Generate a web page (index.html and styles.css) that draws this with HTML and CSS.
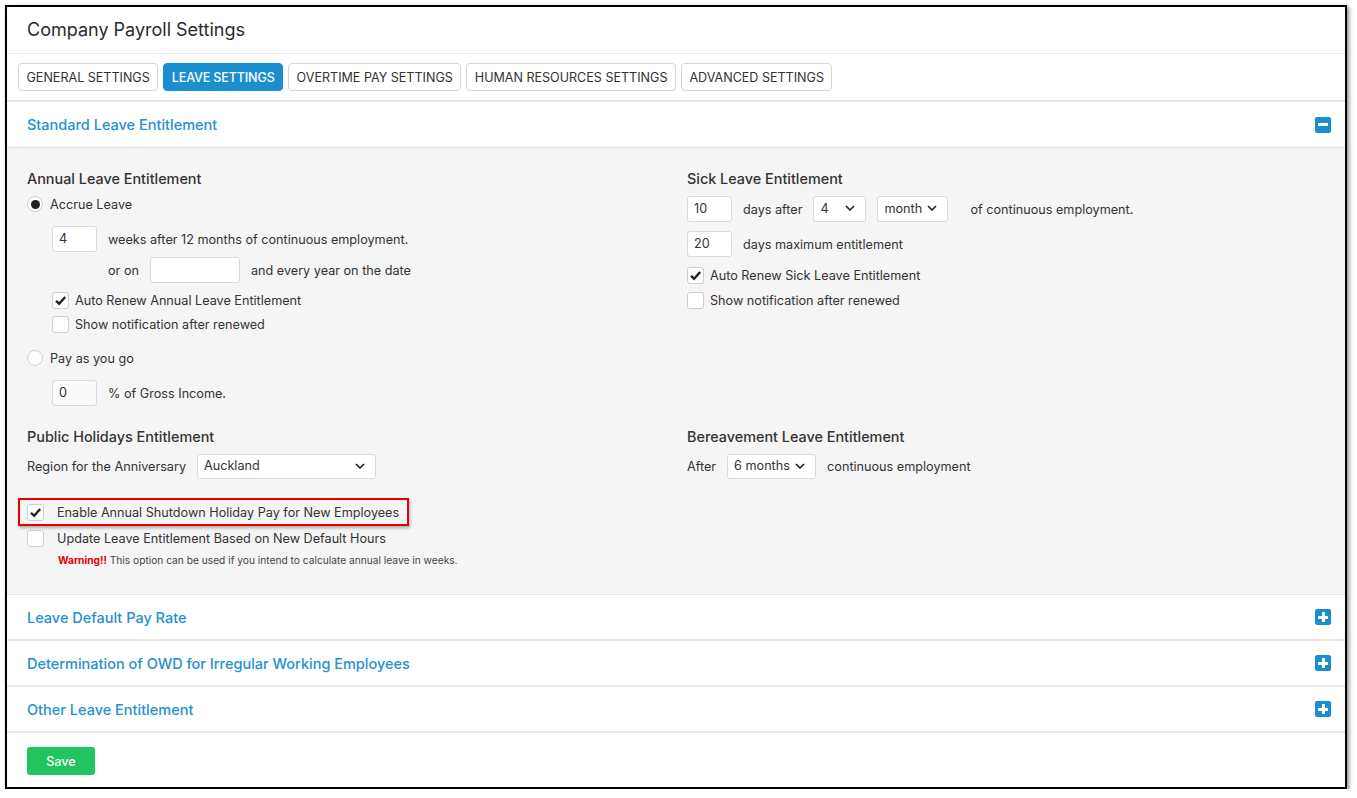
FILE: index.html
```html
<!DOCTYPE html>
<html lang="en">
<head>
  <meta charset="UTF-8">
  <title>Company Payroll Settings</title>
  <link rel="stylesheet" href="styles.css">
</head>
<body>
  <div class="frame">
    <div class="page-title">Company Payroll Settings</div>

    <div class="tabs">
      <a href="#" class="tab">GENERAL SETTINGS</a>
      <a href="#" class="tab active">LEAVE SETTINGS</a>
      <a href="#" class="tab">OVERTIME PAY SETTINGS</a>
      <a href="#" class="tab">HUMAN RESOURCES SETTINGS</a>
      <a href="#" class="tab">ADVANCED SETTINGS</a>
    </div>

    <div class="section-head open">
      <span>Standard Leave Entitlement</span>
      <span class="toggle"><span class="bar"></span></span>
    </div>

    <div class="section-body">
      <div class="grid">
        <!-- annual leave -->
        <div class="col">
          <div class="field-title">Annual Leave Entitlement</div>
          <div class="radio-row mt7"><span class="radio checked"></span>Accrue Leave</div>
          <div class="line indent mt14">
            <span class="input w45">4</span>
            <span>weeks after 12 months of continuous employment.</span>
          </div>
          <div class="line indent-or mt5">
            <span>or on</span>
            <span class="input w90"></span>
            <span>and every year on the date</span>
          </div>
          <div class="check-row indent mt9">
            <span class="checkbox checked"><svg viewBox="0 0 17 17"><path d="M3.4 8.8 L6.9 12.3 L13.8 4.6" /></svg></span>
            Auto Renew Annual Leave Entitlement
          </div>
          <div class="check-row indent mt7">
            <span class="checkbox"></span>
            Show notification after renewed
          </div>
          <div class="radio-row mt17"><span class="radio"></span>Pay as you go</div>
          <div class="line indent mt14">
            <span class="input w45 disabled">0</span>
            <span>% of Gross Income.</span>
          </div>
        </div>

        <!-- sick leave -->
        <div class="col">
          <div class="field-title">Sick Leave Entitlement</div>
          <div class="line mt7">
            <span class="input w45">10</span>
            <span>days after</span>
            <span class="select w53">4<svg viewBox="0 0 10 6"><path d="M1 1 L5 5 L9 1" /></svg></span>
            <span class="select w71">month<svg viewBox="0 0 10 6"><path d="M1 1 L5 5 L9 1" /></svg></span>
            <span class="after-gap">of continuous employment.</span>
          </div>
          <div class="line mt9">
            <span class="input w45">20</span>
            <span>days maximum entitlement</span>
          </div>
          <div class="check-row mt10">
            <span class="checkbox checked"><svg viewBox="0 0 17 17"><path d="M3.4 8.8 L6.9 12.3 L13.8 4.6" /></svg></span>
            Auto Renew Sick Leave Entitlement
          </div>
          <div class="check-row mt8">
            <span class="checkbox"></span>
            Show notification after renewed
          </div>
        </div>

        <!-- public holidays -->
        <div class="col">
          <div class="field-title">Public Holidays Entitlement</div>
          <div class="line short mt7">
            <span>Region for the Anniversary</span>
            <span class="select w179">Auckland<svg viewBox="0 0 10 6"><path d="M1 1 L5 5 L9 1" /></svg></span>
          </div>
          <div class="highlight mt19">
            <div class="check-row wide">
              <span class="checkbox checked"><svg viewBox="0 0 17 17"><path d="M3.4 8.8 L6.9 12.3 L13.8 4.6" /></svg></span>
              Enable Annual Shutdown Holiday Pay for New Employees
            </div>
          </div>
          <div class="check-row wide mt3">
            <span class="checkbox"></span>
            Update Leave Entitlement Based on New Default Hours
          </div>
          <div class="warning mt7"><b>Warning!!</b> This option can be used if you intend to calculate annual leave in weeks.</div>
        </div>

        <!-- bereavement -->
        <div class="col">
          <div class="field-title">Bereavement Leave Entitlement</div>
          <div class="line short mt7">
            <span>After</span>
            <span class="select w89">6 months<svg viewBox="0 0 10 6"><path d="M1 1 L5 5 L9 1" /></svg></span>
            <span>continuous employment</span>
          </div>
        </div>
      </div>
    </div>

    <div class="section-head">
      <span>Leave Default Pay Rate</span>
      <span class="toggle"><span class="bar"></span><span class="bar vert"></span></span>
    </div>
    <div class="section-head">
      <span>Determination of OWD for Irregular Working Employees</span>
      <span class="toggle"><span class="bar"></span><span class="bar vert"></span></span>
    </div>
    <div class="section-head">
      <span>Other Leave Entitlement</span>
      <span class="toggle"><span class="bar"></span><span class="bar vert"></span></span>
    </div>

    <div class="footer">
      <button class="save-btn">Save</button>
    </div>
  </div>
</body>
</html>
```

FILE: styles.css
```css
* {
  margin: 0;
  padding: 0;
  box-sizing: border-box;
}

body {
  font-family: Inter, "Noto Sans", sans-serif;
  font-size: 12.65px;
  color: #333;
  background: #fff;
  padding: 5px 0 0 5px;
}

.frame {
  width: 1342px;
  height: 784px;
  border: 2px solid #000;
  box-shadow: 2px 2px 4px rgba(0, 0, 0, 0.45);
  display: flex;
  flex-direction: column;
}

.frame > * {
  flex-shrink: 0;
}

.page-title {
  height: 47px;
  padding: 0 0 2px 20px;
  display: flex;
  align-items: center;
  font-size: 18px;
  color: #2b2b2b;
  border-bottom: 1px solid #e8e8e8;
}

.tabs {
  display: flex;
  gap: 5px;
  padding: 9px 11px;
  border-bottom: 2px solid #e6e6e6;
}

.tab {
  height: 28px;
  padding: 0 7.5px;
  display: flex;
  align-items: center;
  border: 1px solid #d4d4d4;
  border-radius: 4px;
  color: #333;
  text-decoration: none;
  font-size: 12.55px;
}

.tab.active {
  background: #1a8ecf;
  border-color: #1a8ecf;
  color: #fff;
  font-weight: 500;
  letter-spacing: -0.15px;
}

.section-head {
  height: 46px;
  padding: 0 14px 0 20px;
  display: flex;
  justify-content: space-between;
  align-items: center;
  font-size: 14.5px;
  font-weight: 500;
  color: #2690d0;
  border-bottom: 2px solid #e8e8e8;
}

.section-head.open {
  border-bottom: 1px solid #e6e6e6;
}

.toggle {
  position: relative;
  width: 16px;
  height: 16px;
  background: #1a8ecf;
  border-radius: 2px;
}

.toggle .bar {
  position: absolute;
  left: 3px;
  top: 6.5px;
  width: 10px;
  height: 3px;
  background: #fff;
}

.toggle .bar.vert {
  left: 6.5px;
  top: 3px;
  width: 3px;
  height: 10px;
}

.section-body {
  background: #f5f5f5;
  padding: 21px 0 28px 20px;
  border-bottom: 1px solid #e6e6e6;
}

.grid {
  display: grid;
  grid-template-columns: 660px 1fr;
  row-gap: 21px;
}

.field-title {
  font-size: 14.4px;
  font-weight: 500;
  line-height: 20px;
}

.mt3 { margin-top: 3px; }
.mt5 { margin-top: 5px; }
.mt7 { margin-top: 7px; }
.mt8 { margin-top: 8px; }
.mt9 { margin-top: 9px; }
.mt10 { margin-top: 10px; }
.mt14 { margin-top: 14px; }
.mt17 { margin-top: 17px; }
.mt19 { margin-top: 19px; }

.line {
  height: 26px;
  display: flex;
  align-items: center;
  gap: 11px;
}

.line.short {
  height: 25px;
}

.indent {
  padding-left: 25px;
}

.indent-or {
  padding-left: 81px;
}

.input,
.select {
  height: 100%;
  display: flex;
  align-items: center;
  padding: 0 6px 2px;
  background: #fff;
  border: 1px solid #dadada;
  border-radius: 3px;
}

.input.disabled {
  background: #fafafa;
}

.select {
  justify-content: space-between;
  padding-right: 10px;
}

.select svg {
  width: 10px;
  height: 6px;
  fill: none;
  stroke: #222;
  stroke-width: 1.6;
}

.w45 { width: 45px; }
.w53 { width: 53px; }
.w71 { width: 71px; }
.w89 { width: 89px; }
.w90 { width: 90px; }
.w179 { width: 179px; }

.after-gap {
  margin-left: 11px;
}

.radio-row {
  height: 16px;
  display: flex;
  align-items: center;
  gap: 7px;
}

.radio {
  width: 16px;
  height: 16px;
  border: 1px solid #cfcfcf;
  border-radius: 50%;
  background: #fff;
  display: flex;
  align-items: center;
  justify-content: center;
}

.radio.checked::after {
  content: "";
  width: 9px;
  height: 9px;
  border-radius: 50%;
  background: #222;
}

.check-row {
  height: 17px;
  display: flex;
  align-items: center;
  gap: 6px;
  white-space: nowrap;
}

.check-row.wide {
  height: 18px;
  gap: 13px;
}

.checkbox {
  width: 17px;
  height: 17px;
  flex-shrink: 0;
  border: 1px solid #cfcfcf;
  border-radius: 3px;
  background: #fff;
}

.checkbox svg {
  display: block;
  width: 15px;
  height: 15px;
  fill: none;
  stroke: #1f1f1f;
  stroke-width: 2.7;
}

.highlight {
  width: 391px;
  height: 28px;
  margin-left: -9px;
  padding-left: 7px;
  display: flex;
  align-items: center;
  border: 2px solid #e30000;
  box-shadow: 1px 2px 3px rgba(0, 0, 0, 0.3);
}

.warning {
  padding-left: 31px;
  font-size: 10.2px;
  line-height: 12px;
  color: #444;
}

.warning b {
  color: #e30000;
}

.footer {
  flex: 1;
  padding: 14px 20px 0;
}

.save-btn {
  width: 68px;
  height: 28px;
  border: none;
  border-radius: 3px;
  background: #21c45e;
  color: #fff;
  font-family: Inter, "Noto Sans", sans-serif;
  font-size: 12.65px;
  font-weight: 500;
}
```
